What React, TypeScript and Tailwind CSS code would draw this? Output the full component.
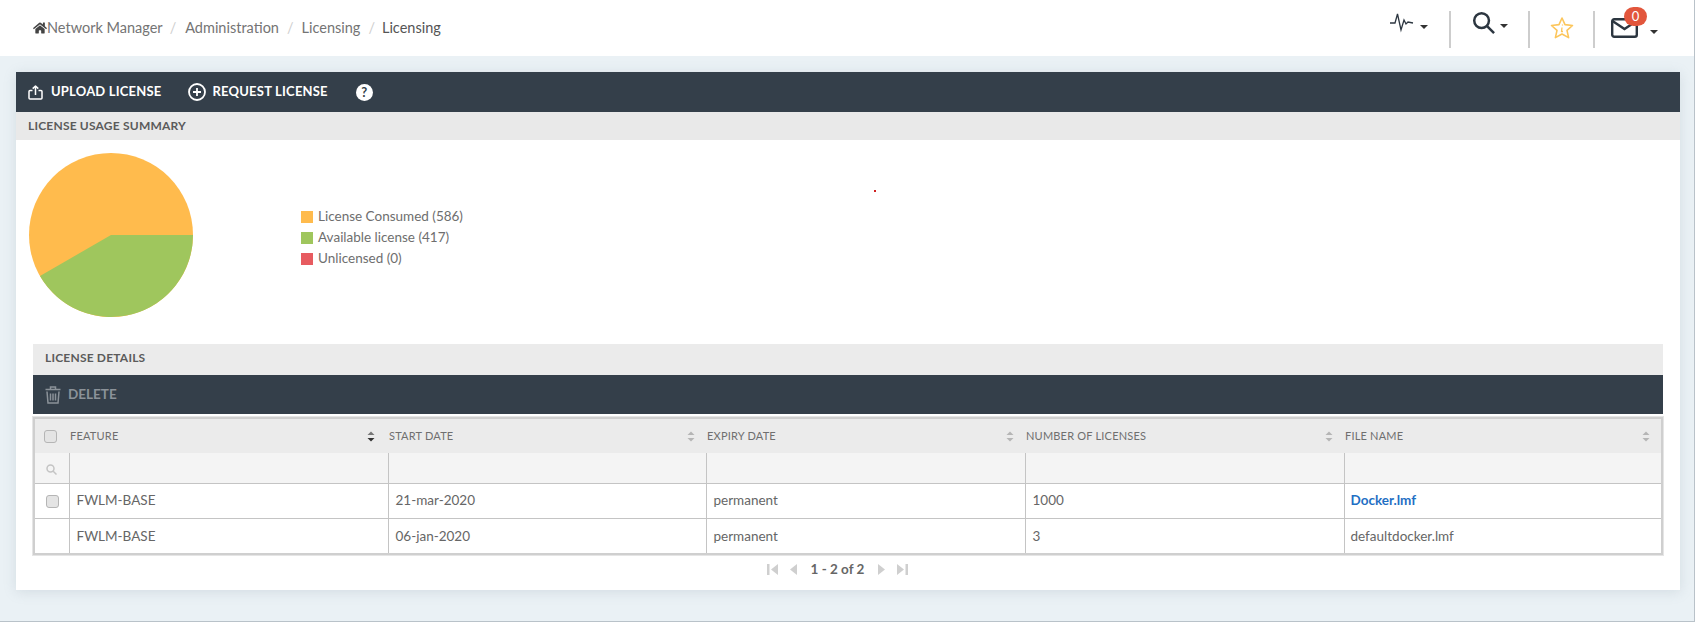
import React from "react";
import { FaHome } from "react-icons/fa";

const font = { fontFamily: "Lato, 'Open Sans', sans-serif" };

function Caret({ className = "" }: { className?: string }) {
  return <span className={`inline-block w-0 h-0 border-l-[4px] border-r-[4px] border-t-[4px] border-l-transparent border-r-transparent border-t-[#333] ${className}`} />;
}

function Sort({ active = false }: { active?: boolean }) {
  return (
    <svg width="8" height="11" viewBox="0 0 8 11" className="shrink-0">
      <path d="M4 0.5 L7.5 4 H0.5 Z" fill={active ? "#777" : "#b5b5b5"} />
      <path d="M4 10.5 L7.5 7 H0.5 Z" fill={active ? "#333" : "#b5b5b5"} />
    </svg>
  );
}

function Divider() {
  return <div className="w-[2px] h-[37px] bg-[#cdcdcd]" />;
}

function CheckBox() {
  return <span className="inline-block w-[13px] h-[13px] rounded-[3px] border border-[#b5b5b5] bg-[#e4e4e4]" />;
}

function HeadCell({ label, active, w }: { label: string; active?: boolean; w: string }) {
  return (
    <th className={`${w} h-[34px] p-0 font-normal text-left`}>
      <div className={`flex items-center justify-between pl-[1px] ${active ? "pr-[13px]" : "pr-[11px]"} text-[11px] text-[#6f6f6f] tracking-[0.2px]`}>
        <span>{label}</span>
        <Sort active={active} />
      </div>
    </th>
  );
}

function Row({ check, feature, start, expiry, count, file, link }: { check?: boolean; feature: string; start: string; expiry: string; count: string; file: string; link?: boolean }) {
  const td = "border-l border-[#c4c4c4] px-[7px] text-[13.5px] text-[#666] h-[35px]";
  const fileTd = link
    ? "border-l border-[#c4c4c4] px-[6px] text-[13.5px] font-bold text-[#1f6fc4] h-[35px]"
    : "border-l border-[#c4c4c4] px-[6px] text-[13.5px] text-[#666] h-[35px]";
  return (
    <tr className="border-t border-[#c4c4c4] bg-white">
      <td className="h-[35px] text-center">{check && <div className="flex justify-center pt-[1px] pl-[2px]"><CheckBox /></div>}</td>
      <td className={td}>{feature}</td>
      <td className={td}>{start}</td>
      <td className={td}>{expiry}</td>
      <td className={td}>{count}</td>
      <td className={fileTd}>{file}</td>
    </tr>
  );
}

export default function App() {
  return (
    <div style={font} className="relative h-[622px] bg-[#eaf1f5] border-r border-b border-[#b9c2c9] flex flex-col">
      <header className="h-[56px] bg-white flex items-center justify-between pl-[33px] pr-[36px] shrink-0">
        <nav className="flex items-center text-[14.5px] text-[#747474]">
          <FaHome size={14} color="#444" className="shrink-0" />
          <span>Network Manager</span>
          <span className="text-[#cfcfcf] ml-[7px] mr-[9px]">/</span>
          <span>Administration</span>
          <span className="text-[#cfcfcf] ml-[8px] mr-[8px]">/</span>
          <span>Licensing</span>
          <span className="text-[#cfcfcf] ml-[8px] mr-[7px]">/</span>
          <span className="text-[#555]">Licensing</span>
        </nav>
        <div className="flex items-center h-[48px] pt-[2px]">
          <div className="flex items-center gap-[6px] mb-[14px]">
            <svg width="24" height="22" viewBox="0 0 24 22" fill="none" stroke="#2c3640" strokeWidth="1.3">
              <path d="M0 12 H5 L7.5 3 L11 19 L14 9 L16 13 L18 11 L23 12" />
            </svg>
            <Caret className="mt-[10px]" />
          </div>
          <div className="mx-[21px]"><Divider /></div>
          <div className="flex items-center gap-[5px] mb-[14px]">
            <svg width="23" height="23" viewBox="0 0 24 24" fill="none" stroke="#2c3640" strokeWidth="2.6">
              <circle cx="10" cy="10" r="7.7" />
              <path d="M15.5 15.5 L23 23" />
            </svg>
            <Caret className="mt-[8px]" />
          </div>
          <div className="mx-[20px]"><Divider /></div>
          <svg width="24" height="24" viewBox="0 0 24 24" fill="none" stroke="#fcc65c" strokeWidth="1.6" strokeLinejoin="round" className="mb-[2px]">
            <path d="M12 2 L15 8.6 L22.5 9.5 L17 14.4 L18.6 21.6 L12 18 L5.4 21.6 L7 14.4 L1.5 9.5 L9 8.6 Z" />
            <path d="M12.5 8.5 V9.5 M12 11.5 L11.5 15.5 H13" strokeWidth="1.3" />
          </svg>
          <div className="ml-[19px] mr-[16px]"><Divider /></div>
          <div className="relative flex items-center gap-[12px] mb-[2px]">
            <svg width="27" height="20" viewBox="0 0 27 20" fill="none" stroke="#2c3640" strokeWidth="2.4">
              <rect x="1.2" y="1.2" width="24.6" height="17.6" rx="2" />
              <path d="M1.5 3 L13.5 11 L25.5 3" />
            </svg>
            <Caret className="mt-[8px]" />
            <span className="absolute left-[13px] top-[-11px] w-[23px] h-[19px] rounded-full bg-[#e2563c] text-white text-[13px] leading-[19px] text-center">0</span>
          </div>
        </div>
      </header>

      <main className="mt-[16px] ml-[16px] mr-[14px] h-[518px] bg-white shadow-[0_2px_12px_rgba(120,140,155,0.2)] flex flex-col">
        <div className="h-[40px] bg-[#343f4a] flex items-center pl-[12px] text-white font-bold text-[13px] tracking-[0.2px] shrink-0">
          <svg width="15" height="15" viewBox="0 0 15 15" fill="none" stroke="white" strokeWidth="1.5" strokeLinejoin="round" className="mr-[8px]">
            <path d="M4.5 5.5 H2 Q1 5.5 1 6.5 V13 Q1 14 2 14 H13 Q14 14 14 13 V6.5 Q14 5.5 13 5.5 H10.5" />
            <path d="M7.5 10 V1 M4.7 3.6 L7.5 1 L10.3 3.6" />
          </svg>
          <span>UPLOAD LICENSE</span>
          <svg width="18" height="18" viewBox="0 0 18 18" fill="none" stroke="white" strokeWidth="1.8" className="ml-[26px] mr-[7px]">
            <circle cx="9" cy="9" r="8" />
            <path d="M9 5 V13 M5 9 H13" />
          </svg>
          <span>REQUEST LICENSE</span>
          <span className="ml-[28px] w-[17px] h-[17px] rounded-full bg-white text-[#343f4a] text-[13px] leading-[17px] text-center font-bold">?</span>
        </div>
        <div className="h-[28px] bg-[#e9e9e9] flex items-center pl-[12px] text-[12px] font-bold text-[#5b5b5b] tracking-[0.2px] shrink-0">LICENSE USAGE SUMMARY</div>

        <section className="relative h-[204px] flex items-start pl-[12px] pt-[12px] shrink-0">
          <svg width="166" height="166" viewBox="0 0 166 166" className="shrink-0">
            <circle cx="83" cy="83" r="82" fill="#ffbb4d" />
            <path d="M83 83 H165 A82 82 0 0 1 12 124 Z" fill="#9fc65d" />
          </svg>
          <ul className="ml-[107px] mt-[54px] text-[13.5px] text-[#6e6e6e] leading-[21px]">
            <li className="flex items-center gap-[5px]"><span className="w-[12px] h-[12px] bg-[#ffbb4d]" />License Consumed (586)</li>
            <li className="flex items-center gap-[5px]"><span className="w-[12px] h-[12px] bg-[#9fc65d]" />Available license (417)</li>
            <li className="flex items-center gap-[5px]"><span className="w-[12px] h-[12px] bg-[#e75b60]" />Unlicensed (0)</li>
          </ul>
          <span className="absolute left-[858px] top-[50px] w-[2px] h-[2px] bg-[#d02020]" />
        </section>

        <section className="mx-[17px] flex flex-col">
          <div className="h-[31px] bg-[#ebebeb] flex items-center pl-[12px] pb-[3px] text-[12px] font-bold text-[#5b5b5b] tracking-[0.2px]">LICENSE DETAILS</div>
          <div className="h-[39px] bg-[#343f4a] flex items-center pl-[12px] gap-[7px] text-[13.5px] font-bold text-[#8b9299]">
            <svg width="16" height="18" viewBox="0 0 16 18" fill="none" stroke="#8b9299" strokeWidth="1.5">
              <path d="M0.5 3.5 H15.5 M5.5 3 V1 H10.5 V3" />
              <path d="M2 5.5 L3 17 H13 L14 5.5" />
              <path d="M5.5 7.5 V14.5 M8 7.5 V14.5 M10.5 7.5 V14.5" />
            </svg>
            <span>DELETE</span>
          </div>
          <div className="mt-[3px] border-2 border-[#cfcfcf] outline outline-1 outline-[#e5e5e5]">
            <table className="w-full table-fixed border-collapse">
              <thead>
                <tr className="bg-[#ebebeb]">
                  <th className="w-[34px] h-[34px] p-0">
                    <div className="flex justify-center pr-[4px]"><CheckBox /></div>
                  </th>
                  <HeadCell label="FEATURE" active w="w-[319px]" />
                  <HeadCell label="START DATE" w="w-[318px]" />
                  <HeadCell label="EXPIRY DATE" w="w-[319px]" />
                  <HeadCell label="NUMBER OF LICENSES" w="w-[319px]" />
                  <HeadCell label="FILE NAME" w="" />
                </tr>
                <tr className="bg-[#f4f4f4]">
                  <td className="h-[30px] text-center">
                    <svg width="11" height="11" viewBox="0 0 11 11" fill="none" stroke="#c4c4c4" strokeWidth="1.5" className="inline-block">
                      <circle cx="4.5" cy="4.5" r="3.5" />
                      <path d="M7 7 L10.5 10.5" />
                    </svg>
                  </td>
                  <td className="border-l border-[#c4c4c4]" />
                  <td className="border-l border-[#c4c4c4]" />
                  <td className="border-l border-[#c4c4c4]" />
                  <td className="border-l border-[#c4c4c4]" />
                  <td className="border-l border-[#c4c4c4]" />
                </tr>
              </thead>
              <tbody>
                <Row check feature="FWLM-BASE" start="21-mar-2020" expiry="permanent" count="1000" file="Docker.lmf" link />
                <Row feature="FWLM-BASE" start="06-jan-2020" expiry="permanent" count="3" file="defaultdocker.lmf" />
              </tbody>
            </table>
          </div>
          <div className="h-[28px] flex items-center justify-center gap-[12px] text-[13.5px] font-bold text-[#666] pr-[21px]">
            <svg width="11" height="11" viewBox="0 0 11 11" fill="#cfcfcf"><path d="M0 0 H2.5 V11 H0 Z M11 0 V11 L4 5.5 Z" /></svg>
            <svg width="7" height="11" viewBox="0 0 7 11" fill="#cfcfcf"><path d="M7 0 V11 L0 5.5 Z" /></svg>
            <span className="mx-[2px]">1 - 2 of 2</span>
            <svg width="7" height="11" viewBox="0 0 7 11" fill="#cfcfcf"><path d="M0 0 V11 L7 5.5 Z" /></svg>
            <svg width="11" height="11" viewBox="0 0 11 11" fill="#cfcfcf"><path d="M11 0 H8.5 V11 H11 Z M0 0 V11 L7 5.5 Z" /></svg>
          </div>
        </section>
      </main>
    </div>
  );
}
